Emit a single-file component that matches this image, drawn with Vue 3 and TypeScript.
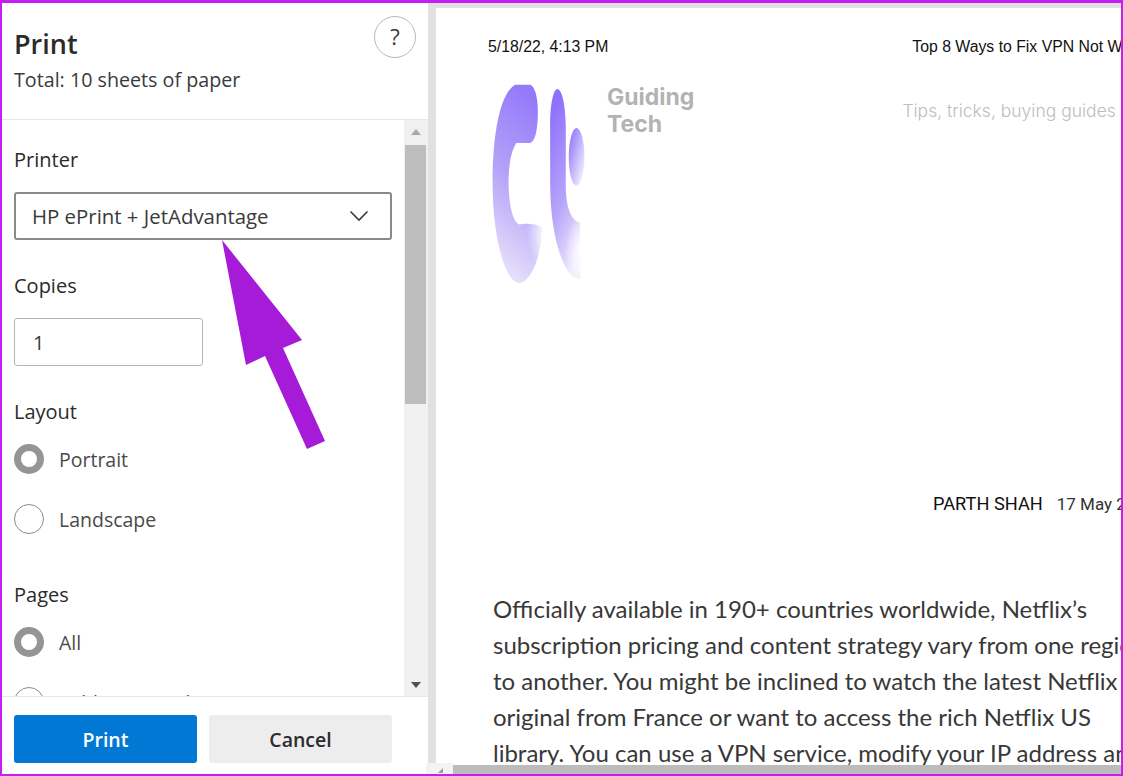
<script setup lang="ts">
const articleLines = [
  'Officially available in 190+ countries worldwide, Netflix’s',
  'subscription pricing and content strategy vary from one region',
  'to another. You might be inclined to watch the latest Netflix',
  'original from France or want to access the rich Netflix US',
  'library. You can use a VPN service, modify your IP address and',
]
</script>

<template>
  <div class="frame">
    <aside class="panel">
      <header class="panel-head">
        <div>
          <h1 class="title">Print</h1>
          <p class="total">Total: 10 sheets of paper</p>
        </div>
        <button class="help">?</button>
      </header>

      <div class="panel-body">
        <div class="options">
          <h2 class="label label-first">Printer</h2>
          <div class="select">
            <span>HP ePrint + JetAdvantage</span>
            <svg width="20" height="12" viewBox="0 0 20 12">
              <path d="M1.5 1.5 10 10l8.500-8.500" fill="none" stroke="#3c3c3c" stroke-width="1.600" />
            </svg>
          </div>

          <h2 class="label label-copies">Copies</h2>
          <div class="input">1</div>

          <h2 class="label label-layout">Layout</h2>
          <div class="radio-row"><span class="radio on"></span>Portrait</div>
          <div class="radio-row"><span class="radio"></span>Landscape</div>

          <h2 class="label label-pages">Pages</h2>
          <div class="radio-row"><span class="radio on"></span>All</div>
          <div class="radio-row"><span class="radio"></span>Odd pages only</div>
        </div>

        <div class="scrollbar">
          <span class="arrow arrow-up"></span>
          <div class="thumb"></div>
          <span class="arrow arrow-down"></span>
        </div>
      </div>

      <footer class="panel-foot">
        <button class="btn btn-primary">Print</button>
        <button class="btn">Cancel</button>
      </footer>
    </aside>

    <main class="preview">
      <div class="sheet">
        <div class="sheet-head">
          <span>5/18/22, 4:13 PM</span>
          <span>Top 8 Ways to Fix VPN Not Working</span>
        </div>

        <div class="brand">
          <svg class="logo" viewBox="60 190 290 610">
            <defs>
              <linearGradient id="bigFill" x1="0.75" y1="0.05" x2="0.55" y2="1">
                <stop offset="0" stop-color="#9479fb" />
                <stop offset="0.5" stop-color="#b3a2f8" />
                <stop offset="1" stop-color="#e6dffa" />
              </linearGradient>
              <linearGradient id="slimFill" x1="0.3" y1="0.05" x2="0.6" y2="1">
                <stop offset="0" stop-color="#8f72fb" />
                <stop offset="0.55" stop-color="#b6a5f9" />
                <stop offset="1" stop-color="#f1edfd" />
              </linearGradient>
              <linearGradient id="dotFill" x1="0.2" y1="0.2" x2="0.9" y2="0.9">
                <stop offset="0" stop-color="#9f88f9" />
                <stop offset="1" stop-color="#f4f1fe" />
              </linearGradient>
              <radialGradient id="fade">
                <stop offset="0.2" stop-color="#fff" />
                <stop offset="1" stop-color="#fff" stop-opacity="0" />
              </radialGradient>
            </defs>
            <path
              d="M135 195 H180 C196 200 204 240 203 285 C202 330 196 365 180 370 H138 C122 395 115 440 115 490 C115 550 128 612 148 615 C165 612 195 610 216 625 C212 720 180 790 146 791 C100 785 67 640 67 490 C67 340 90 220 135 195 Z"
              fill="url(#bigFill)"
            />
            <ellipse cx="238" cy="640" rx="68" ry="120" fill="url(#fade)" />
            <path
              d="M262 208 C275 210 286 250 287 320 L287 500 C288 560 300 600 330 610 L332 778 C290 790 240 670 240 490 L240 320 C240 250 250 208 262 208 Z"
              fill="url(#slimFill)"
            />
            <ellipse cx="350" cy="690" rx="65" ry="115" fill="url(#fade)" />
            <path
              d="M320 325 C333 328 343 365 343 412 C343 460 330 498 319 498 C306 498 296 460 296 412 C296 365 306 325 320 325 Z"
              fill="url(#dotFill)"
            />
          </svg>
          <div class="brand-name">Guiding<br />Tech</div>
          <div class="tagline">Tips, tricks, buying guides</div>
        </div>

        <div class="byline"><strong>PARTH SHAH</strong><span class="byline-date">17 May 2022</span></div>

        <article class="article">
          <p v-for="line in articleLines" :key="line">{{ line }}</p>
        </article>
      </div>

      <div class="hbar">
        <div class="hbar-thumb"></div>
      </div>
    </main>

    <div class="corner"><span class="corner-grip"></span></div>
  </div>

  <svg class="pointer" viewBox="0 0 1123 776" width="1123" height="776">
    <path d="M222 240 L302 340 L283 348 L325 441 L307 449 L265 356 L246 365 Z" fill="#a61bd8" />
  </svg>
</template>

<style>
html,
body {
  margin: 0;
  overflow: hidden;
}
</style>

<style scoped>
* {
  box-sizing: border-box;
}

.frame {
  position: relative;
  display: flex;
  width: 1123px;
  height: 776px;
  overflow: hidden;
  border: 2px solid #c41ff0;
  border-top-width: 3px;
  background: #e1e1e1;
  font-family: "Open Sans", "Noto Sans", sans-serif;
  color: #2b2b2b;
}

.panel {
  display: flex;
  flex-direction: column;
  flex: none;
  width: 426px;
  background: #fff;
}

.panel-head {
  display: flex;
  justify-content: space-between;
  flex: none;
  height: 117px;
  padding: 22px 12px 0 12px;
  border-bottom: 1px solid #e8e8e8;
}

.title {
  margin: 0;
  font-size: 27px;
  line-height: 38px;
  font-weight: 600;
}

.total {
  margin: 4px 0 0;
  font-size: 19.700px;
  line-height: 26px;
  color: #3a3a3a;
}

.help {
  width: 42px;
  height: 42px;
  margin: -9px 0 0 0;
  padding: 0 0 2px;
  border: 1px solid #b9b9b9;
  border-radius: 50%;
  background: #fff;
  font: 22px "Open Sans", sans-serif;
  color: #3a3a3a;
}

.panel-body {
  display: flex;
  flex: 1;
  min-height: 0;
}

.options {
  flex: 1;
  min-width: 0;
  padding: 0 12px;
  overflow: hidden;
}

.label {
  margin: 0 0 19px;
  font-size: 20px;
  line-height: 26px;
  font-weight: 500;
}

.label-first {
  margin-top: 27px;
}

.label-copies {
  margin-top: 33px;
}

.label-layout {
  margin-top: 33px;
}

.label-pages {
  margin-top: 48px;
}

.select {
  display: flex;
  align-items: center;
  justify-content: space-between;
  width: 378px;
  height: 48px;
  padding: 0 21px 0 16px;
  border: 2px solid #8a8a8a;
  border-radius: 3px;
  font-size: 20.400px;
  color: #3a3a3a;
}

.input {
  width: 189px;
  height: 48px;
  padding-left: 18px;
  border: 1px solid #b5b5b5;
  border-radius: 3px;
  font-size: 20px;
  line-height: 48px;
  color: #3a3a3a;
}

.radio-row {
  display: flex;
  align-items: center;
  gap: 15px;
  height: 30px;
  margin-bottom: 30px;
  font-size: 19.500px;
  color: #4a4a4a;
}

.radio {
  flex: none;
  width: 30px;
  height: 30px;
  border: 1px solid #8a8a8a;
  border-radius: 50%;
}

.radio.on {
  border: 7.500px solid #959595;
}

.scrollbar {
  position: relative;
  flex: none;
  width: 24px;
  background: #f0f0f0;
}

.thumb {
  width: 21px;
  height: 259px;
  margin: 25px 0 0 1px;
  background: #bdbdbd;
}

.arrow {
  position: absolute;
  left: 7px;
  width: 0;
  height: 0;
  border-left: 5px solid transparent;
  border-right: 5px solid transparent;
}

.arrow-up {
  top: 9px;
  border-bottom: 6px solid #a8a8a8;
}

.arrow-down {
  bottom: 8px;
  border-top: 6px solid #505050;
}

.panel-foot {
  display: flex;
  gap: 12px;
  flex: none;
  height: 78px;
  padding: 18px 0 0 12px;
  border-top: 1px solid #e8e8e8;
}

.btn {
  width: 183px;
  height: 48px;
  padding: 0;
  border: 0;
  border-radius: 3px;
  background: #ededed;
  font: 600 19.500px "Open Sans", sans-serif;
  color: #2b2b2b;
}

.btn-primary {
  background: #0078d4;
  color: #fff;
}

.preview {
  position: relative;
  flex: 1;
  min-width: 0;
  margin: 5px 0 0 8px;
  overflow: hidden;
  background: #fff;
}

.sheet {
  width: 900px;
  padding: 30px 0 0 52px;
}

.sheet-head {
  display: flex;
  gap: 304px;
  font-family: "Liberation Sans", Arial, sans-serif;
  font-size: 15.800px;
  line-height: 18px;
  white-space: nowrap;
  color: #111;
}

.brand {
  display: flex;
  align-items: flex-start;
  height: 205px;
  margin-top: 27px;
}

.logo {
  flex: none;
  width: 97px;
  height: 203px;
  margin-left: 2px;
}

.brand-name {
  margin: 1px 0 0 20px;
  font-family: Inter, sans-serif;
  font-size: 23px;
  line-height: 27px;
  font-weight: 700;
  color: #b3b3b3;
}

.tagline {
  margin: 16px 0 0 208px;
  font-family: Inter, sans-serif;
  font-size: 17.500px;
  font-weight: 300;
  line-height: 24px;
  white-space: nowrap;
  color: #bdbdbd;
}

.byline {
  display: flex;
  align-items: baseline;
  gap: 14px;
  margin: 205px 0 0 445px;
  font-family: Roboto, sans-serif;
  font-size: 18.200px;
  line-height: 22px;
  white-space: nowrap;
  color: #111;
}

.byline strong {
  font-weight: 400;
}

.byline-date {
  font-size: 17px;
  color: #333;
}

.article {
  margin: 76px 0 0 5px;
  font-family: Lato, sans-serif;
  font-size: 24px;
  line-height: 36px;
  white-space: nowrap;
  color: #383838;
}

.article p {
  margin: 0;
}

.hbar {
  position: absolute;
  left: 0;
  right: 0;
  bottom: 0;
  height: 9px;
  background: #f0f0f0;
}

.hbar-thumb {
  height: 9px;
  margin-left: 17px;
  background: #bcbcbc;
}

.corner {
  position: absolute;
  left: 424px;
  bottom: 0;
  width: 27px;
  height: 11px;
  background: #f3f3f3;
}

.corner-grip {
  position: absolute;
  left: 12px;
  bottom: 1px;
  border-left: 5px solid transparent;
  border-bottom: 5px solid #9a9a9a;
}

.pointer {
  position: absolute;
  top: 0;
  left: 0;
  pointer-events: none;
}
</style>
